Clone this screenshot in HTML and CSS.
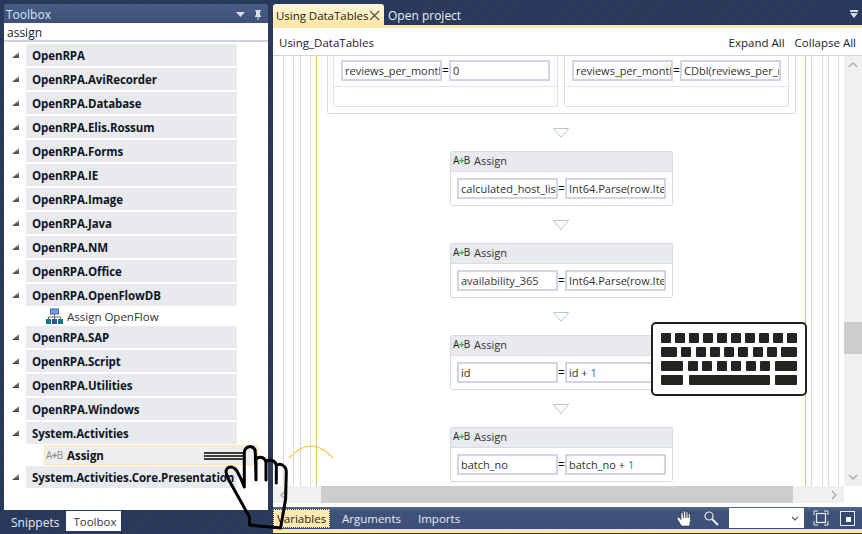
FILE: index.html
```html
<!DOCTYPE html>
<html lang="en">
<head>
    <meta charset="UTF-8">
    <title>Using DataTables</title>
    <link rel="stylesheet" href="styles.css">
</head>
<body>
    <!-- Toolbox -->
    <aside class="sidebar">
        <div class="panel-title">
            <span>Toolbox</span>
            <svg class="panel-icons" width="28" height="12" viewBox="0 0 28 12"><path d="M0 3h9L4.500 8z" fill="#d5dce8"/><path d="M19 1h6v1h-1v4l1 1v1h-2.500v3h-1V8H19V7l1-1V2h-1z" fill="#d5dce8"/></svg>
        </div>
        <div class="panel-body">
            <div class="search">assign</div>
            <div class="tree">
                <div class="group"><i class="arrow"></i><b>OpenRPA</b></div>
                <div class="group"><i class="arrow"></i><b>OpenRPA.AviRecorder</b></div>
                <div class="group"><i class="arrow"></i><b>OpenRPA.Database</b></div>
                <div class="group"><i class="arrow"></i><b>OpenRPA.Elis.Rossum</b></div>
                <div class="group"><i class="arrow"></i><b>OpenRPA.Forms</b></div>
                <div class="group"><i class="arrow"></i><b>OpenRPA.IE</b></div>
                <div class="group"><i class="arrow"></i><b>OpenRPA.Image</b></div>
                <div class="group"><i class="arrow"></i><b>OpenRPA.Java</b></div>
                <div class="group"><i class="arrow"></i><b>OpenRPA.NM</b></div>
                <div class="group"><i class="arrow"></i><b>OpenRPA.Office</b></div>
                <div class="group group-open"><i class="arrow"></i><b>OpenRPA.OpenFlowDB</b></div>
                <div class="item">
                    <svg class="item-icon" width="17" height="17" viewBox="0 0 17 17">
                        <rect x="4.500" y="1" width="8" height="5" fill="#6f9fe0" stroke="#44679c"/>
                        <path d="M8.500 6v3M2.500 11V9h12v2M8.500 9v2" fill="none" stroke="#666"/>
                        <rect x="0" y="11" width="5" height="5" fill="#117a83"/>
                        <rect x="6" y="11" width="5" height="5" fill="#2a56a8"/>
                        <rect x="12" y="11" width="5" height="5" fill="#117a83"/>
                    </svg>
                    <span>Assign OpenFlow</span>
                </div>
                <div class="group"><i class="arrow"></i><b>OpenRPA.SAP</b></div>
                <div class="group"><i class="arrow"></i><b>OpenRPA.Script</b></div>
                <div class="group"><i class="arrow"></i><b>OpenRPA.Utilities</b></div>
                <div class="group"><i class="arrow"></i><b>OpenRPA.Windows</b></div>
                <div class="group group-open"><i class="arrow"></i><b>System.Activities</b></div>
                <div class="item item-selected">
                    <span class="ab ab-grey">A<em>+</em>B</span>
                    <b>Assign</b>
                </div>
                <div class="group"><i class="arrow"></i><b>System.Activities.Core.Presentation</b></div>
            </div>
        </div>
        <div class="side-tabs">
            <span class="side-tab">Snippets</span>
            <span class="side-tab side-tab-active">Toolbox</span>
        </div>
    </aside>

    <!-- Designer -->
    <main class="designer">
        <div class="doc-tabs">
            <div class="doc-tab doc-tab-active">
                <span>Using DataTables</span>
                <svg width="11" height="11" viewBox="0 0 11 11"><path d="M1 1l9 9M10 1l-9 9" stroke="#555" stroke-width="1.300" fill="none"/></svg>
            </div>
            <div class="doc-tab">Open project</div>
            <svg class="doc-menu" width="10" height="10" viewBox="0 0 10 10"><path d="M1 1h8v2H1zM1 4h8L5 9z" fill="#d5dce8"/></svg>
        </div>
        <div class="doc-body">
            <div class="crumbs">
                <span>Using_DataTables</span>
                <div class="crumb-links">
                    <span>Expand All</span>
                    <span>Collapse All</span>
                </div>
            </div>
            <div class="canvas-row">
                <div class="canvas">
                    <div class="parallel">
                        <div class="branch">
                            <div class="branch-inner">
                                <div class="assign-row">
                                    <div class="field">reviews_per_month</div>
                                    <span class="eq">=</span>
                                    <div class="field">0</div>
                                </div>
                            </div>
                        </div>
                        <div class="branch">
                            <div class="branch-inner">
                                <div class="assign-row">
                                    <div class="field">reviews_per_month</div>
                                    <span class="eq">=</span>
                                    <div class="field">CDbl(reviews_per_month)</div>
                                </div>
                            </div>
                        </div>
                    </div>

                    <svg class="drop" width="16" height="10" viewBox="0 0 16 10"><path d="M.500.500h15L8 9.500z" fill="#fff" stroke="#b9c3d6"/></svg>
                    <div class="assign">
                        <div class="assign-head"><span class="ab">A<em>+</em>B</span>Assign</div>
                        <div class="assign-row">
                            <div class="field">calculated_host_listings</div>
                            <span class="eq">=</span>
                            <div class="field">Int64.Parse(row.Item)</div>
                        </div>
                    </div>

                    <svg class="drop" width="16" height="10" viewBox="0 0 16 10"><path d="M.500.500h15L8 9.500z" fill="#fff" stroke="#b9c3d6"/></svg>
                    <div class="assign">
                        <div class="assign-head"><span class="ab">A<em>+</em>B</span>Assign</div>
                        <div class="assign-row">
                            <div class="field">availability_365</div>
                            <span class="eq">=</span>
                            <div class="field">Int64.Parse(row.Item)</div>
                        </div>
                    </div>

                    <svg class="drop" width="16" height="10" viewBox="0 0 16 10"><path d="M.500.500h15L8 9.500z" fill="#fff" stroke="#b9c3d6"/></svg>
                    <div class="assign">
                        <div class="assign-head"><span class="ab">A<em>+</em>B</span>Assign</div>
                        <div class="assign-row">
                            <div class="field">id</div>
                            <span class="eq">=</span>
                            <div class="field">id + <span class="num">1</span></div>
                        </div>
                    </div>

                    <svg class="drop" width="16" height="10" viewBox="0 0 16 10"><path d="M.500.500h15L8 9.500z" fill="#fff" stroke="#b9c3d6"/></svg>
                    <div class="assign">
                        <div class="assign-head"><span class="ab">A<em>+</em>B</span>Assign</div>
                        <div class="assign-row">
                            <div class="field">batch_no</div>
                            <span class="eq">=</span>
                            <div class="field">batch_no + <span class="num">1</span></div>
                        </div>
                    </div>

                    <svg class="arc" width="46" height="14" viewBox="0 0 46 14"><path d="M1 13Q12 1 23 1T45 13" fill="none" stroke="#fbc53a" stroke-width="1.200"/></svg>
                </div>
                <div class="vscroll">
                    <svg width="10" height="6" viewBox="0 0 10 6"><path d="M1 5l4-4 4 4" fill="none" stroke="#aaa" stroke-width="1.300"/></svg>
                    <div class="vthumb"></div>
                    <svg width="10" height="6" viewBox="0 0 10 6"><path d="M1 1l4 4 4-4" fill="none" stroke="#aaa" stroke-width="1.300"/></svg>
                </div>
            </div>
            <div class="hscroll">
                <svg width="6" height="10" viewBox="0 0 6 10"><path d="M5 1L1 5l4 4" fill="none" stroke="#aaa" stroke-width="1.300"/></svg>
                <div class="hthumb"></div>
                <svg width="6" height="10" viewBox="0 0 6 10"><path d="M1 1l4 4-4 4" fill="none" stroke="#aaa" stroke-width="1.300"/></svg>
            </div>
        </div>
        <div class="status">
            <span class="status-tab status-tab-active">Variables</span>
            <span class="status-tab">Arguments</span>
            <span class="status-tab">Imports</span>
            <div class="status-tools">
                <svg class="pan-icon" width="18" height="18" viewBox="0 0 18 18"><path d="M5.500 17L1 9.500l1.500-1.500L5 10.500V4l1.800-.5L7.500 9V2.300L9.300 2l.7 7V3l1.700-.2L12.200 9V4.500l1.700.2.600 6.300-1 6z" fill="#fff" stroke="#333" stroke-width=".6"/></svg>
                <svg class="find-icon" width="16" height="16" viewBox="0 0 16 16"><circle cx="6" cy="6" r="4" fill="none" stroke="#e8edf5" stroke-width="1.200"/><path d="M9 9l6 6" stroke="#e8edf5" stroke-width="2"/></svg>
                <div class="zoom-box">
                    <svg width="8" height="5" viewBox="0 0 8 5"><path d="M1 1l3 3 3-3" fill="none" stroke="#555" stroke-width="1.100"/></svg>
                </div>
                <svg class="fit-icon" width="16" height="16" viewBox="0 0 16 16"><path d="M1 5V1h4M11 1h4v4M15 11v4h-4M5 15H1v-4" fill="none" stroke="#e8edf5"/><rect x="3.500" y="3.500" width="9" height="9" fill="none" stroke="#e8edf5" stroke-width="1.200"/></svg>
                <svg width="15" height="15" viewBox="0 0 15 15"><rect x=".5" y=".5" width="14" height="14" fill="#34486f" stroke="#e8edf5"/><rect x="6" y="6" width="5" height="5" fill="#fff"/></svg>
            </div>
        </div>
        <div class="status-edge"></div>
    </main>

    <!-- on-screen overlays from the recording -->
    <div class="keyboard">
        <div class="key-row key-row-1">
            <i></i><i></i><i></i><i></i><i></i><i></i><i></i><i></i><i></i><i></i>
        </div>
        <div class="key-row key-row-2">
            <i class="key-16"></i><i></i><i></i><i></i><i></i><i></i><i></i><i></i><i class="key-16"></i>
        </div>
        <div class="key-row key-row-3">
            <i class="key-22"></i><i></i><i></i><i></i><i></i><i></i><i></i><i class="key-22"></i>
        </div>
        <div class="key-row key-row-3">
            <i class="key-22"></i><i class="key-space"></i><i class="key-22"></i>
        </div>
    </div>
    <svg class="hand" width="96" height="92" viewBox="200 440 96 92">
        <path d="M204 453h39M204 456h39M204 459h39" stroke="#000" stroke-width="1.300" fill="none"/>
        <path d="M249.500 525v-8L230 482q-4-7-4-11 1-4 5-4 3 0 6 4 5 9 7.300 16V452q1-5 5.700-5.500 5 .5 5.300 5.500l.7 28V459q3-2.500 6-1.500 3 1 4 4.500v18-18q3-3 6-1.500 4 1.500 4.300 4.500v18-17q3-3 6-1 4 2 4 7l-.7 27-5 29z" fill="none" stroke="#000" stroke-width="3" stroke-linejoin="round"/>
    </svg>
</body>
</html>
```

FILE: styles.css
```css
* {
    margin: 0;
    padding: 0;
    box-sizing: border-box;
}

body {
    width: 862px;
    height: 534px;
    overflow: hidden;
    position: relative;
    display: flex;
    gap: 5px;
    padding: 4px 0 1px 4px;
    font-family: "Open Sans", "Noto Sans", sans-serif;
    font-size: 11.500px;
    color: #1e1e1e;
    background-color: #293a59;
    background-image: repeating-linear-gradient(135deg, #2c3d5d 0, #2c3d5d 1px, #27385a 1px, #27385a 3px);
}

/* Toolbox panel */
.sidebar {
    width: 264px;
    display: flex;
    flex-direction: column;
}

.panel-title {
    height: 19px;
    display: flex;
    justify-content: space-between;
    align-items: center;
    padding: 2px 3px 0 2px;
    color: #d9e8f7;
    font-size: 12px;
    border-radius: 3px 3px 0 0;
    background: linear-gradient(#4a5e85, #3d5178);
}

.panel-icons {
    margin-right: 1px;
}

.panel-body {
    height: 487px;
    background: #fff;
}

.search {
    height: 18px;
    padding: 0 3px;
    line-height: 17px;
    font-size: 12px;
    color: #222;
    border-bottom: 2px solid #cdd3e3;
    margin-top: 1px;
}

.tree {
    padding-top: 2px;
}

.group {
    height: 22px;
    margin-bottom: 2px;
    display: flex;
    align-items: center;
    position: relative;
    margin-left: 22px;
    margin-right: 31px;
    padding-left: 6px;
    background: #e8eaed;
    color: #0f1524;
    letter-spacing: -.1px;
    white-space: nowrap;
}

.group-open {
    margin-bottom: 0;
}

.arrow {
    position: absolute;
    left: -14px;
    top: 8px;
    width: 7px;
    height: 6px;
    background: linear-gradient(#999, #444);
    clip-path: polygon(100% 0, 100% 100%, 0 100%);
}

.item {
    height: 20px;
    display: flex;
    align-items: center;
    margin-left: 39px;
    padding-left: 3px;
    color: #333;
    white-space: nowrap;
}

.item-icon {
    margin-right: 4px;
}

.item-selected {
    margin: 1px 10px 1px 40px;
    padding-left: 1px;
    background: #eeeeee;
    border: 1px solid #ffe8a6;
    color: #111;
}

.side-tabs {
    height: 20px;
    margin-top: 1px;
    display: flex;
}

.side-tab {
    padding: 3px 7px 0 7px;
    font-size: 12px;
    color: #e6edf7;
}

.side-tab-active {
    width: 55px;
    font-size: 11.500px;
    background: #fff;
    color: #333;
}

/* Assign glyph */
.ab {
    display: inline-block;
    width: 18px;
    margin-right: 3px;
    font-size: 10px;
    letter-spacing: -.6px;
    white-space: nowrap;
    color: #222;
}

.ab em {
    font-style: normal;
    font-weight: bold;
    color: #2fae4e;
}

.ab-grey,
.ab-grey em {
    color: #8a8a8a;
}

/* Designer */
.designer {
    width: 589px;
    display: flex;
    flex-direction: column;
}

.doc-tabs {
    height: 21px;
    flex: none;
    display: flex;
    align-items: center;
    position: relative;
    color: #e8eef7;
    font-size: 12px;
    white-space: nowrap;
}

.doc-tab {
    height: 21px;
    display: flex;
    align-items: center;
    padding: 2px 4px 0;
}

.doc-tab-active {
    width: 111px;
    flex: none;
    gap: 1px;
    padding: 2px 3px 0;
    color: #222;
    font-size: 11.500px;
    letter-spacing: -.03px;
    border-radius: 3px 3px 0 0;
    background: linear-gradient(#fff6dc, #ffe8a6);
}

.doc-menu {
    position: absolute;
    right: 3px;
    top: 5px;
}

.doc-body {
    border-top: 3px solid #ffe8a6;
    background: #fff;
    height: 482px;
    flex: none;
    display: flex;
    flex-direction: column;
}

.crumbs {
    height: 28px;
    flex: none;
    display: flex;
    justify-content: space-between;
    align-items: center;
    padding: 1px 6px 0;
    color: #222;
    border-bottom: 1px solid #ccd3e0;
}

.crumb-links {
    display: flex;
    gap: 10px;
}

.canvas-row {
    flex: 1;
    min-height: 0;
    display: flex;
}

/* nested sequence rails run down both sides of the canvas */
.canvas {
    width: 571px;
    position: relative;
    overflow: hidden;
    display: flex;
    flex-direction: column;
    align-items: center;
    padding-left: 6px;
    background-color: #fff;
    background-image:
        linear-gradient(#d6dce8, #d6dce8), linear-gradient(#d6dce8, #d6dce8),
        linear-gradient(#d6dce8, #d6dce8), linear-gradient(#d6dce8, #d6dce8),
        linear-gradient(#e5c268, #e5c268), linear-gradient(#e5c268, #e5c268),
        linear-gradient(#d6dce8, #d6dce8), linear-gradient(#d6dce8, #d6dce8),
        linear-gradient(#d6dce8, #d6dce8), linear-gradient(#d6dce8, #d6dce8);
    background-size: 1px 100%;
    background-repeat: no-repeat;
    background-position:
        10px 0, 20px 0, 27px 0, 37px 0, 43px 0,
        532px 0, 538px 0, 549px 0, 555px 0, 565px 0;
}

.parallel {
    width: 469px;
    height: 58px;
    flex: none;
    display: flex;
    gap: 6px;
    padding: 0 6px 6px 5px;
    border: 1px solid #d6dce8;
    border-top: 0;
    border-radius: 0 0 2px 2px;
}

.branch {
    width: 225px;
    border: 1px solid #dde2ec;
    border-top: 0;
    border-radius: 0 0 3px 3px;
}

.branch-inner {
    height: 31px;
    padding: 4px 7px 0;
    border-bottom: 1px solid #dde2ec;
}

.assign-row {
    display: flex;
    align-items: center;
}

.assign {
    width: 223px;
    height: 55px;
    flex: none;
    border: 1px solid #d6dce8;
    border-radius: 2px;
    background: #fff;
}

.assign-head {
    height: 20px;
    display: flex;
    align-items: center;
    padding-left: 2px;
    padding-bottom: 3px;
    margin-bottom: 6px;
    background: #e8eaed;
    border-bottom: 1px solid #d6dce8;
    color: #333;
    font-size: 11px;
}

.assign .assign-row {
    padding-left: 6px;
}

.field {
    width: 101px;
    height: 21px;
    padding: 0 2px;
    line-height: 18px;
    font-size: 11px;
    color: #333;
    overflow: hidden;
    white-space: nowrap;
    border: 2px solid #cfd5e4;
}

.eq {
    width: 7px;
    text-align: center;
    font-size: 12px;
    color: #111;
}

.num {
    color: #2b7cc9;
}

.drop {
    flex: none;
    margin: 14px 0 13px -1px;
}

.arc {
    position: absolute;
    left: 15px;
    top: 389px;
}

.vscroll {
    width: 18px;
    position: relative;
    background: #f0f0f0;
    display: flex;
    flex-direction: column;
    justify-content: space-between;
    align-items: center;
    padding: 6px 0;
}

.vthumb {
    position: absolute;
    left: 0;
    top: 266px;
    width: 18px;
    height: 32px;
    background: #cdcdcd;
}

.hscroll {
    height: 17px;
    flex: none;
    width: 571px;
    margin-bottom: 4px;
    position: relative;
    display: flex;
    justify-content: space-between;
    align-items: center;
    padding: 0 7px;
    background: #f0f0f0;
}

.hthumb {
    position: absolute;
    left: 48px;
    top: 0;
    width: 472px;
    height: 17px;
    background: #cdcdcd;
}

/* Bottom bar */
.status {
    height: 22px;
    flex: none;
    display: flex;
    align-items: center;
    color: #e6edf7;
    background: linear-gradient(#53668c, #3e5279 25%, #3c5078);
}

.status-tab {
    margin-right: 17px;
}

.status-tab-active {
    width: 57px;
    height: 19px;
    margin-right: 12px;
    padding-left: 3px;
    line-height: 17px;
    overflow: hidden;
    color: #222;
    background: #ffeab0;
    border: 1px dotted #444;
}

.status-tools {
    margin-left: auto;
    display: flex;
    align-items: center;
    padding-right: 7px;
}

.pan-icon {
    margin-right: 9px;
}

.find-icon {
    margin-right: 10px;
}

.zoom-box {
    width: 75px;
    height: 20px;
    display: flex;
    justify-content: flex-end;
    align-items: center;
    padding-right: 5px;
    background: #fff;
}

.fit-icon {
    margin: 0 11px 0 9px;
}

.status-edge {
    height: 4px;
    flex: none;
    background: #ffe8a6;
}

/* Keyboard overlay */
.keyboard {
    position: absolute;
    left: 651px;
    top: 322px;
    width: 156px;
    height: 74px;
    display: flex;
    flex-direction: column;
    gap: 4.500px;
    padding: 9px 8px;
    background: #fff;
    border: 2px solid #23241f;
    border-radius: 5px;
}

.key-row {
    display: flex;
    justify-content: space-between;
    height: 10px;
}

.key-row i {
    display: block;
    width: 10px;
    background: #23241f;
    border-radius: 1px;
}

.key-row .key-16 {
    width: 16px;
}

.key-row .key-22 {
    width: 22px;
}

.key-row .key-space {
    width: 81px;
}

/* Cursor overlay */
.hand {
    position: absolute;
    left: 200px;
    top: 440px;
}
```
